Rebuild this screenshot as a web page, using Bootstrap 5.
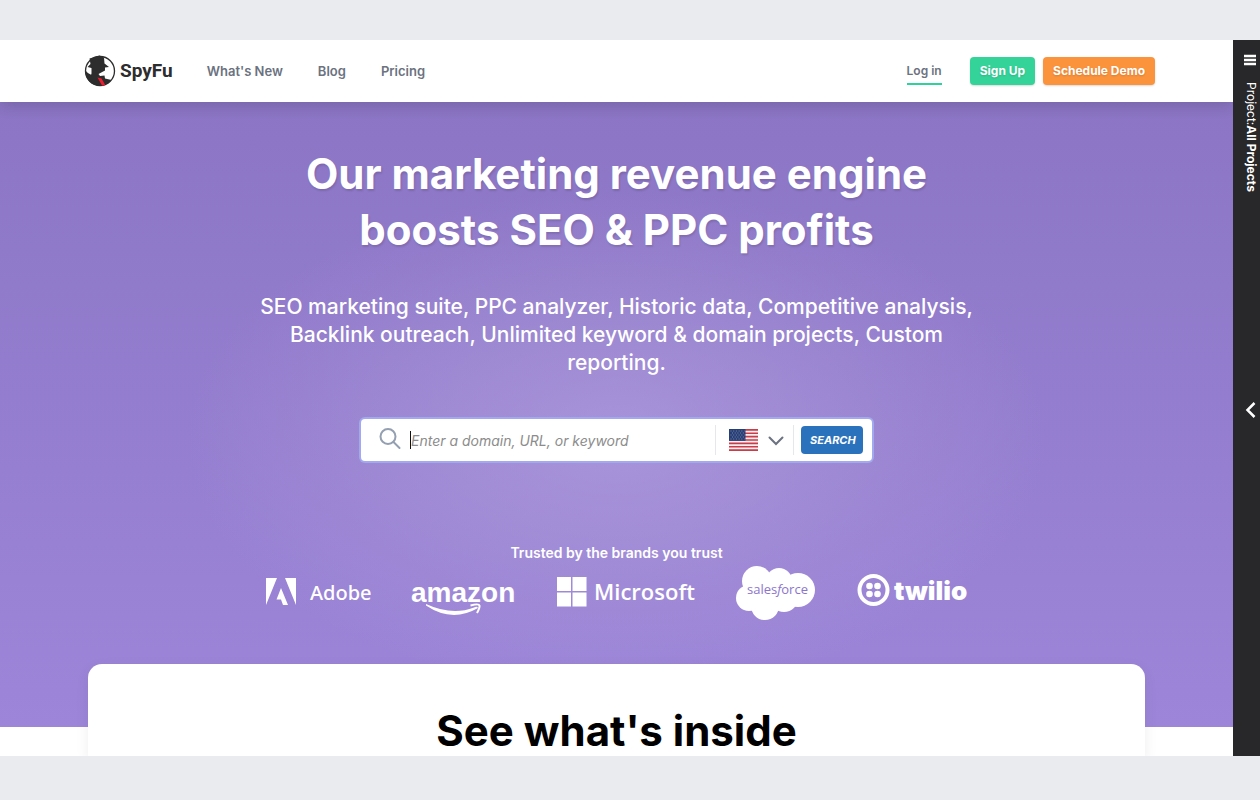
<!DOCTYPE html>
<html lang="en">
<head>
<meta charset="utf-8">
<meta name="viewport" content="width=device-width, initial-scale=1">
<title>SpyFu</title>
<link href="https://cdn.jsdelivr.net/npm/bootstrap@5.3.0/dist/css/bootstrap.min.css" rel="stylesheet">
<style>
  body { font-family: Inter, "Liberation Sans", sans-serif; background: #e9ebef; height: 100vh; padding: 40px 0 44px; overflow: hidden; }
  .site-head { min-height: 62px; padding: 0 78px 0 84px; box-shadow: 0 3px 14px rgba(0,0,0,.16); z-index: 2; }
  .wordmark { font: 700 19px/30px Roboto, sans-serif; color: #2d2d2e; }
  .site-head .nav-link { font-size: 13px; line-height: 20px; font-weight: 600; color: #6b7280; padding: 0; }
  .main-links { gap: 35px; margin-left: 34px; }
  .site-head .login { font-size: 12px; border-bottom: 2px solid #2fd29b; padding: 4px 0 2px; margin-right: 28px; }
  .site-head .btn { font-size: 12px; line-height: 20px; font-weight: 700; color: #fff; padding: 4px 10px; border: 0; border-radius: 4px; text-shadow: 0 1px 2px rgba(0,0,0,.15); box-shadow: 0 1px 2px rgba(0,0,0,.15); }
  .btn-signup { background: #34d399; }
  .btn-demo { background: #fb923c; margin-left: 8px; }
  .hero { padding: 44px 24px 108px; color: #fff;
    background: radial-gradient(ellipse 430px 250px at 50% 54%, rgba(178,160,222,.65), rgba(178,160,222,0)), linear-gradient(#8b75c4, #9d86d9); }
  .hero h1 { font-size: 42px; line-height: 56px; font-weight: 700; text-shadow: 1px 2px 2px rgba(0,0,0,.12); margin: 0 0 35px; }
  .lede { font-size: 21px; line-height: 28px; font-weight: 500; max-width: 740px; margin: 0 auto 42px; }
  .search { max-width: 511px; height: 42px; border-radius: 4px; box-shadow: 0 0 0 2px #a3a9ee; margin: 0 auto 82px; padding-right: 9px; padding-left: 18px; }
  .caret { width: 1px; height: 18px; background: #111; margin-left: 9px; }
  .search .form-control { border: 0; padding: 0; font-size: 14px; font-style: italic; box-shadow: none; background: none; color: #333; }
  .search .form-control::placeholder { color: #8c8c8c; opacity: 1; }
  .country { border-left: 1px solid #e5e7eb; border-right: 1px solid #e5e7eb; height: 30px; padding: 0 8px 0 13px; margin-right: 7px; }
  .country select { width: 18px; height: 24px; padding: 0; border: 0; font-size: 0; margin-left: 9px; background-position: center; background-size: 16px 16px;
    background-image: url("data:image/svg+xml,%3Csvg xmlns='http://www.w3.org/2000/svg' viewBox='0 0 16 16' fill='none' stroke='%236b7280' stroke-width='2' stroke-linecap='round'%3E%3Cpath d='M1.500 5.500L8 12L14.500 5.500'/%3E%3C/svg%3E"); }
  .search .btn { background: #2b72bd; color: #fff; font-size: 11px; line-height: 20px; font-weight: 700; font-style: italic; padding: 4px 9px; border: 0; border-radius: 4px; width: 62px; flex: none; }
  .trusted { font-size: 14px; line-height: 20px; font-weight: 600; margin: 0; }
  .brands { gap: 41px; height: 56px; }
  .brands text { fill: #fff; }
  .brands svg { overflow: visible; flex: none; }
  .inside { margin: -63px 88px 0; border-radius: 14px 14px 0 0; min-height: 92px; padding-top: 39px; box-shadow: 0 4px 14px rgba(0,0,0,.07); z-index: 1; }
  .inside h2 { font-size: 42px; line-height: 56px; font-weight: 700; color: #000; margin: 0; }
  .rail { width: 27px; background: #28282a; color: #fff; padding: 13px 0 6px; flex: none; }
  .rail-part { flex: 1 1 0; }
  .rail button { background: none; border: 0; padding: 0; line-height: 1; }
  .rail .project { writing-mode: vertical-rl; font-size: 12px; line-height: 18px; margin-top: 15px; margin-left: 7px; }
  .rail .collapse-tab { margin: 0 0 0 8px; }
</style>
</head>
<body class="m-0">
<div class="d-flex h-100 overflow-hidden">
  <div class="flex-grow-1 d-flex flex-column bg-white overflow-hidden">
    <header class="site-head d-flex align-items-center bg-white position-relative">
      <a href="#" class="d-flex align-items-center text-decoration-none" aria-label="SpyFu home">
        <svg width="32" height="32" viewBox="0 0 32 32" aria-hidden="true">
          <circle cx="16" cy="16" r="14.500" fill="#fff" stroke="#2d2d2e" stroke-width="1.300"/>
          <path fill="#2d2d2e" d="M5.500 3.500L15.500 .5L20 2.500L20.500 8.500L25 12L21 12.500V15.500L14.500 19L16 21L20.500 20.500L21 23.500L27.500 25A14.800 14.800 0 0 1 4.500 25.500L7 20L7.500 18.500V13L3.500 12L6.500 9Z"/>
          <path fill="#2d2d2e" d="M1.500 15.500Q4 19 7.500 20L5.500 26.500Q.5 21 1.500 15.500Z"/>
          <path fill="#ed1c2e" d="M13.500 22.500L17.500 23.500L21.500 30.500H18Z"/>
        </svg>
        <span class="wordmark ms-1">SpyFu</span>
      </a>
      <nav class="d-flex main-links" aria-label="Main">
        <a class="nav-link" href="#">What's New</a><a class="nav-link" href="#">Blog</a><a class="nav-link" href="#">Pricing</a>
      </nav>
      <div class="d-flex align-items-center ms-auto">
        <a class="nav-link login" href="#">Log in</a>
        <button type="button" class="btn btn-signup">Sign Up</button>
        <button type="button" class="btn btn-demo">Schedule Demo</button>
      </div>
    </header>
    <main class="text-center">
      <section class="hero">
        <h1>Our marketing revenue engine<br>boosts SEO &amp; PPC profits</h1>
        <p class="lede">SEO marketing suite, PPC analyzer, Historic data, Competitive analysis, Backlink outreach, Unlimited keyword &amp; domain projects, Custom reporting.</p>
        <form class="search d-flex align-items-center bg-white" role="search">
          <label for="q" class="d-flex">
            <svg role="img" aria-label="Search" width="22" height="24" viewBox="0 0 22 24" fill="none" stroke="#949fb1" stroke-width="2" stroke-linecap="round"><circle cx="9" cy="8.500" r="7.500"/><path d="M14.500 14L20.500 20"/></svg></label>
          <span class="caret flex-shrink-0"></span>
          <input id="q" class="form-control" type="text" placeholder="Enter a domain, URL, or keyword">
          <div class="country d-flex align-items-center">
            <svg width="29" height="22" viewBox="0 0 29 22" aria-hidden="true"><path fill="#f6f0f2" d="M0 0H29V22H0z"/><path stroke="#ca3c48" stroke-width="1.700" d="M0 .85H29M0 4.230H29M0 7.610H29M0 11H29M0 14.380H29M0 17.770H29M0 21.150H29"/><path fill="#283f76" d="M0 0H16.500V11.850H0z"/><path stroke="#8d99bb" stroke-width=".8" stroke-dasharray="1 1.700" d="M1.500 2H15.500M3 4H15M1.500 6H15.500M3 8H15M1.500 10H15.500"/></svg>
            <select class="form-select" aria-label="Country"><option>US</option></select>
          </div>
          <button type="submit" class="btn">SEARCH</button>
        </form>
        <p class="trusted">Trusted by the brands you trust</p>
        <div class="brands d-flex justify-content-center align-items-center">
          <svg width="104" height="56" role="img" aria-label="Adobe"><path fill="#fff" d="M0 15H11L0 42ZM19 15H30V42ZM15 25L22 42H17L15 36.500H10.500Z"/><text x="44" y="37" font-family="Noto Sans" font-size="20" font-weight="500">Adobe</text></svg>
          <svg width="105" height="56" role="img" aria-label="amazon"><text x="0" y="39" font-family="Liberation Sans" font-size="28" font-weight="700">amazon</text><path fill="#fff" d="M15 41Q41 53 63 44.500Q66 43 67 45Q41 60 15 42.500Z"/><path d="M59.500 42.500Q68 40.500 68.500 42.500Q69 44.500 66 50" fill="none" stroke="#fff" stroke-width="2"/></svg>
          <svg width="138" height="56" role="img" aria-label="Microsoft"><path fill="#fff" d="M0 14H14V28H0zM15.500 14H29.500V28H15.500zM0 29.500H14V43.500H0zM15.500 29.500H29.500V43.500H15.500z"/><text x="37" y="37" font-family="Open Sans" font-size="22" font-weight="600">Microsoft</text></svg>
          <svg width="80" height="56" role="img" aria-label="salesforce"><g fill="#fff"><circle cx="21" cy="18" r="15"/><circle cx="43" cy="18" r="13"/><circle cx="62" cy="27" r="17"/><circle cx="13" cy="35" r="13"/><circle cx="29" cy="43" r="14"/><circle cx="48" cy="35" r="14"/><path d="M15 15H60V40H15z"/></g><text x="11" y="31" font-family="Open Sans" font-size="13" style="fill:#8b75cc">sales<tspan font-style="italic">f</tspan>orce</text></svg>
          <svg width="110" height="56" role="img" aria-label="twilio"><circle cx="16.500" cy="27" r="14" fill="none" stroke="#fff" stroke-width="4"/><g fill="#fff"><circle cx="12.500" cy="23" r="3.300"/><circle cx="20.500" cy="23" r="3.300"/><circle cx="12.500" cy="31" r="3.300"/><circle cx="20.500" cy="31" r="3.300"/></g><text x="37" y="37" font-family="Inter" font-size="26" font-weight="900">twilio</text></svg>
        </div>
      </section>
      <section class="inside bg-white position-relative"><h2>See what's inside</h2></section>
    </main>
  </div>
  <aside class="rail d-flex flex-column">
    <div class="rail-part d-flex flex-column">
      <button type="button" class="ms-auto me-1" aria-label="Open projects"><svg class="d-block" width="12" height="14" stroke="#fff" stroke-width="2.500"><path d="M0 3H12M0 7H12M0 11H12"/></svg></button>
      <div class="project">Project:<strong>All Projects</strong></div>
    </div>
    <div class="rail-part">
      <button type="button" class="collapse-tab d-block" aria-label="Expand panel"><svg class="ms-1 d-block" width="11" height="16" fill="none" stroke="#fff" stroke-width="2.500"><path d="M9.500 1L2.500 8L9.500 15"/></svg></button>
    </div>
  </aside>
</div>
<script src="https://cdn.jsdelivr.net/npm/bootstrap@5.3.0/dist/js/bootstrap.bundle.min.js"></script>
</body>
</html>
